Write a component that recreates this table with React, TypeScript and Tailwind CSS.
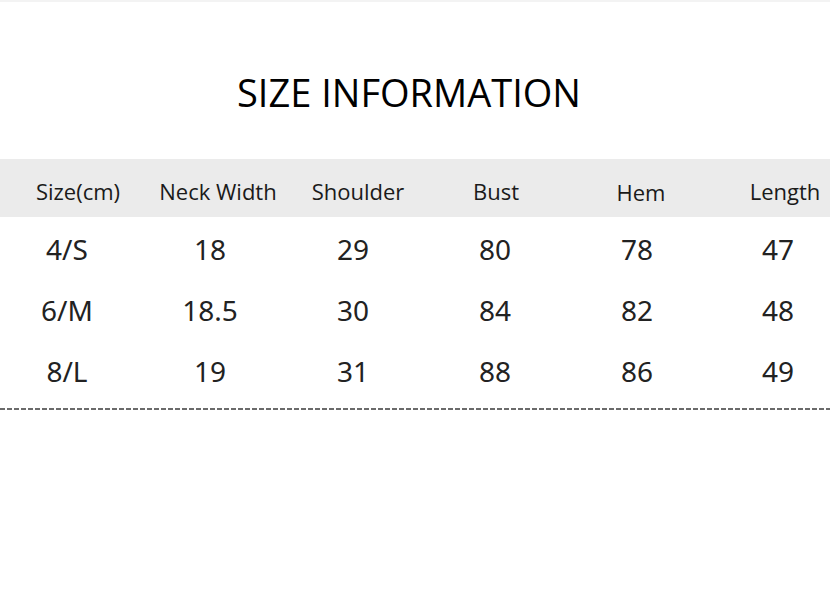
import React from "react";

const headers = [
  { label: "Size(cm)", cls: "ml-[18px]" },
  { label: "Neck Width", cls: "ml-[20px]" },
  { label: "Shoulder", cls: "ml-[20px]" },
  { label: "Bust", cls: "ml-[18px]" },
  { label: "Hem", cls: "ml-[25px] pt-[2px]" },
  { label: "Length", cls: "ml-[24px]" },
];

const dataMl = ["ml-[7px]", "ml-[23px]", "ml-[23px]", "ml-[22px]", "ml-[22px]", "ml-[21px]"];

const rows = [
  ["4/S", "18", "29", "80", "78", "47"],
  ["6/M", "18.5", "30", "84", "82", "48"],
  ["8/L", "19", "31", "88", "86", "49"],
];

export default function App() {
  return (
    <div className="w-[830px] h-[600px] bg-white overflow-hidden flex flex-col">
      <div className="h-[2px] bg-[#f3f3f3]" />
      <div
        className="h-[78px] mt-[51px] pr-[12px] flex items-center justify-center text-[38px] text-black leading-none"
        style={{ fontFamily: '"Open Sans", "Noto Sans", sans-serif' }}
      >
        SIZE INFORMATION
      </div>
      <div
        className="mt-[28px] h-[58px] pt-[6px] bg-[#ebebeb] flex items-center text-[22px] text-[#1a1a1a]"
        style={{ fontFamily: '"Open Sans", "Noto Sans", sans-serif' }}
      >
        {headers.map((h) => (
          <div key={h.label} className={`w-[120px] shrink-0 text-center whitespace-nowrap ${h.cls}`}>
            {h.label}
          </div>
        ))}
      </div>
      <div
        className="flex flex-col pt-[1px] text-[28px] text-[#222]"
        style={{ fontFamily: '"Noto Sans", sans-serif' }}
      >
        {rows.map((r, i) => (
          <div key={i} className="h-[61px] flex items-center">
            {r.map((c, j) => (
              <div key={j} className={`w-[120px] shrink-0 text-center ${dataMl[j]}`}>
                {c}
              </div>
            ))}
          </div>
        ))}
      </div>
      <div className="mt-[7px] h-[2px] w-full bg-[repeating-linear-gradient(to_right,#6b6b6b_0px,#6b6b6b_5px,transparent_5px,transparent_7px)]" />
    </div>
  );
}
